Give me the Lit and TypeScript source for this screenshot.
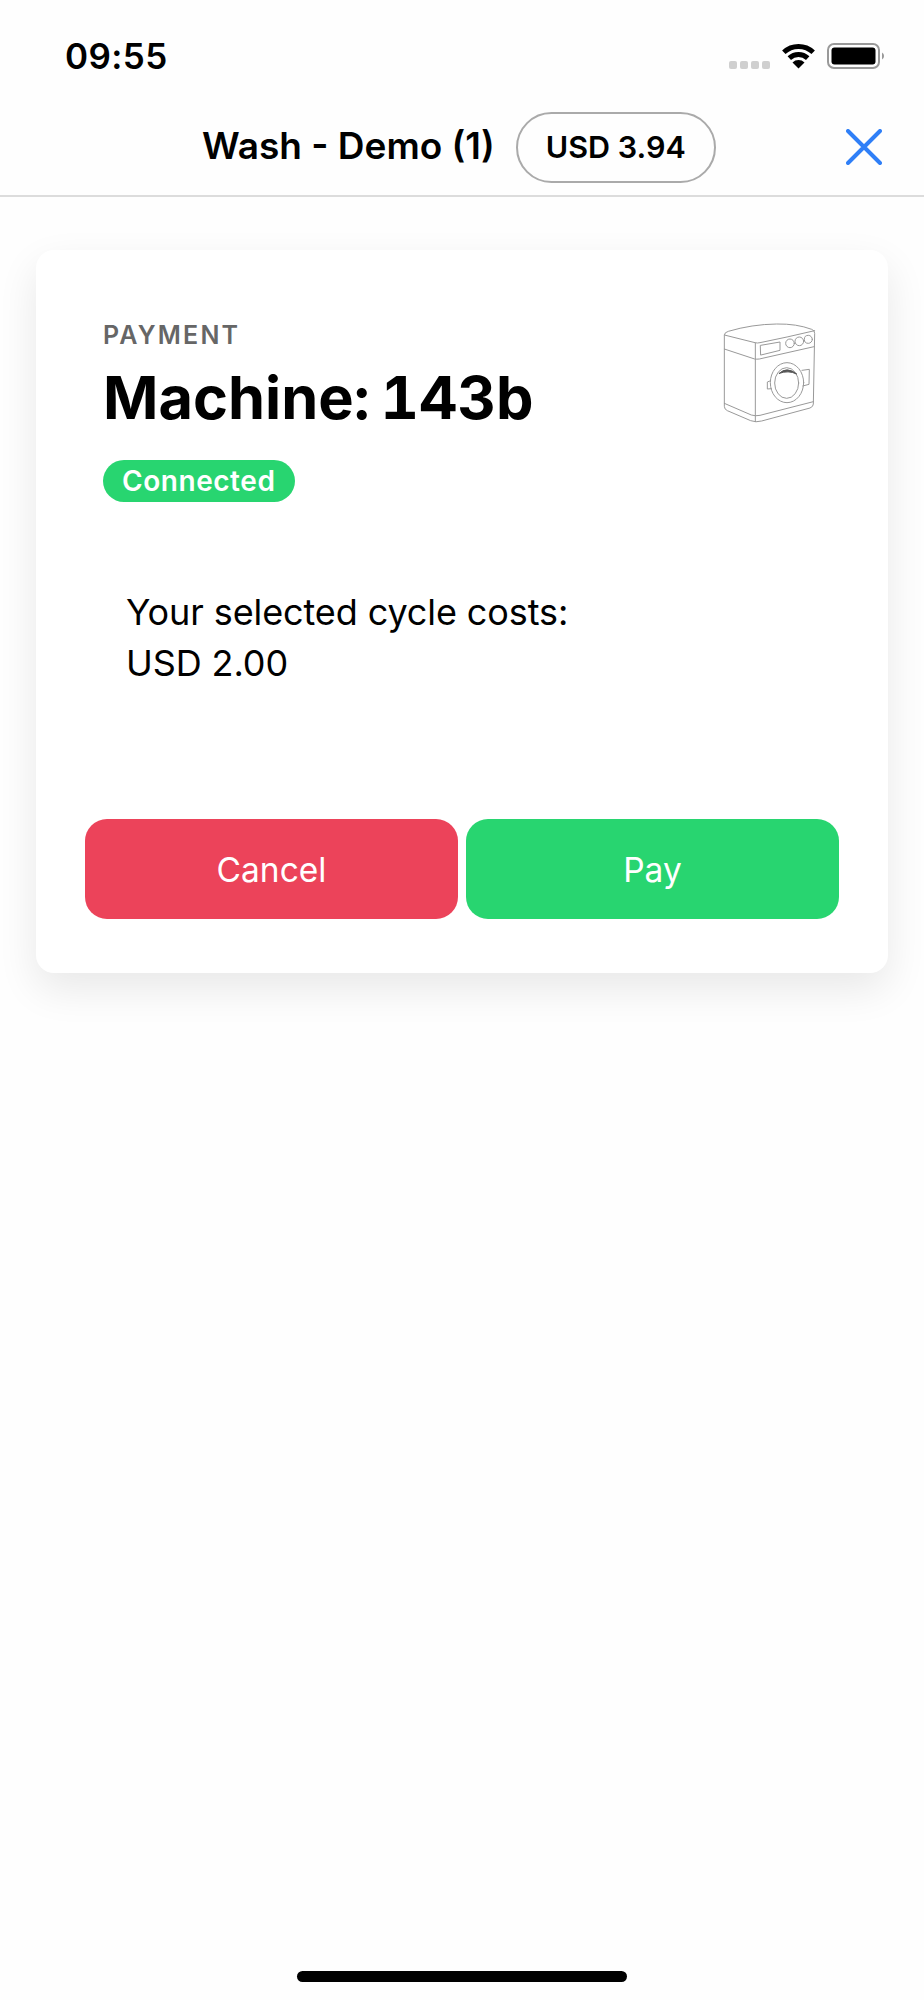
import { LitElement, html, css } from "lit";
import { customElement } from "lit/decorators.js";

@customElement("app-root")
export class AppRoot extends LitElement {
  static styles = css`
    :host {
      display: flex;
      flex-direction: column;
      height: 2000px;
      background: #fefefe;
      color: #000;
      font-family: Inter, "Liberation Sans", sans-serif;
    }

    .status {
      display: flex;
      align-items: center;
      height: 112px;
      padding: 0 38px 0 65px;
      box-sizing: border-box;
    }

    .time {
      font-size: 35px;
      font-weight: 600;
      line-height: 38px;
      letter-spacing: 0.4px;
      margin-right: auto;
    }

    .signal {
      display: flex;
      gap: 3px;
      margin: 18px 11px 0 0;
    }

    .signal span {
      width: 8px;
      height: 8px;
      border-radius: 2px;
      background: #cfcfcf;
    }

    .wifi {
      width: 35px;
      height: 26px;
      margin-right: 11px;
    }

    .battery {
      width: 59px;
      height: 26px;
    }

    .nav {
      display: flex;
      align-items: center;
      height: 85px;
      padding: 0 42px 13px 202px;
      box-sizing: border-box;
      border-bottom: 2px solid #dcdcdc;
    }

    .nav-title {
      margin-bottom: 3px;
      font-size: 37px;
      font-weight: 600;
      white-space: nowrap;
    }

    .balance {
      display: flex;
      align-items: center;
      justify-content: center;
      width: 200px;
      height: 71px;
      box-sizing: border-box;
      margin-left: 21px;
      padding-bottom: 2px;
      border: 2px solid #aaa;
      border-radius: 36px;
      font-size: 30.5px;
      font-weight: 600;
    }

    .close {
      width: 36px;
      height: 36px;
      margin-left: auto;
    }

    .card {
      height: 723px;
      box-sizing: border-box;
      margin: 53px 36px 0;
      padding: 0 68px;
      background: #fff;
      border-radius: 18px;
      box-shadow: 0 16px 40px rgba(0, 0, 0, 0.09);
    }

    .card-head {
      display: flex;
      justify-content: space-between;
      align-items: flex-start;
    }

    .eyebrow {
      margin: 70px 0 0 -1px;
      font-size: 25px;
      line-height: 30px;
      font-weight: 600;
      letter-spacing: 2.2px;
      color: #666;
    }

    .machine {
      margin: 11px 0 0 -1px;
      font-size: 59.5px;
      line-height: 72px;
      font-weight: 700;
      font-variant-numeric: tabular-nums;
      word-spacing: -5px;
      white-space: nowrap;
    }

    .pill {
      display: inline-block;
      margin: 27px 0 0 -1px;
      padding: 0 20px 0 19px;
      height: 42px;
      line-height: 42px;
      border-radius: 21px;
      background: #28d570;
      color: #fff;
      font-size: 28px;
      font-weight: 600;
      letter-spacing: 0.55px;
    }

    .washer {
      width: 100px;
      height: 106px;
      margin-top: 70px;
    }

    .cost {
      margin: 85px 0 0 22px;
      font-size: 36px;
      line-height: 51px;
      letter-spacing: -0.1px;
    }

    .actions {
      display: grid;
      grid-template-columns: 1fr 1fr;
      gap: 8px;
      margin: 130px -19px 0;
    }

    button {
      height: 100px;
      padding-top: 2px;
      border: 0;
      border-radius: 22px;
      color: #fff;
      font: 400 33.5px Inter, "Liberation Sans", sans-serif;
    }

    .cancel {
      background: #ec435a;
    }

    .pay {
      background: #28d570;
    }

    .home {
      width: 330px;
      height: 11px;
      margin: auto auto 18px;
      border-radius: 6px;
      background: #000;
    }
  `;

  render() {
    return html`
      <div class="status">
        <div class="time">09:55</div>
        <div class="signal"><span></span><span></span><span></span><span></span></div>
        <svg class="wifi" viewBox="0 0 35 26">
          <path d="M2.8 9.3A21.5 21.5 0 0 1 32.2 9.3M8.3 15.1A13.5 13.5 0 0 1 26.7 15.1" fill="none" stroke="#000" stroke-width="5" />
          <path d="M17.5 25.5L11.5 19.5A8.5 8.5 0 0 1 23.5 19.5Z" />
        </svg>
        <svg class="battery" viewBox="0 0 59 26">
          <rect x="1" y="1" width="51" height="24" rx="6" fill="none" stroke="#999" stroke-width="2" />
          <rect x="4.5" y="4.5" width="44" height="17" rx="3" />
          <path d="M55 9.5a4 4 0 0 1 0 7Z" fill="#999" />
        </svg>
      </div>
      <div class="nav">
        <span class="nav-title">Wash - Demo (1)</span>
        <span class="balance">USD 3.94</span>
        <svg class="close" viewBox="0 0 36 36">
          <path d="M2 2L34 34M34 2L2 34" fill="none" stroke="#2f7ff7" stroke-width="4" stroke-linecap="round" />
        </svg>
      </div>
      <div class="card">
        <div class="card-head">
          <div>
            <div class="eyebrow">PAYMENT</div>
            <h1 class="machine">Machine: 143b</h1>
            <span class="pill">Connected</span>
          </div>
          <svg class="washer" viewBox="120 90 300 318" fill="none" stroke="#999" stroke-width="3" stroke-linejoin="round" stroke-linecap="round">
            <!-- body -->
            <path d="M133 135Q133 127 145 124Q215 103 290 102Q350 101 395 118Q404 121 404 130L400 342Q400 350 390 354L245 393Q228 398 212 392L142 362Q133 358 133 350Z" />
            <path d="M133 135L225 158Q232 160 240 158Q320 142 404 122" />
            <path d="M133 177L224 207Q230 208 238 207L402 170" />
            <path d="M226 160L226 395" />
            <path d="M133 340L214 375Q226 379 240 376L400 335" />
            <!-- display and knobs -->
            <path d="M242 166L300 156V181L243 195Z" />
            <circle cx="330" cy="160" r="13" />
            <circle cx="358" cy="154" r="13" />
            <circle cx="385" cy="148" r="12" />
            <!-- door -->
            <ellipse cx="321" cy="278" rx="50" ry="60" />
            <ellipse cx="320" cy="279" rx="36" ry="46" />
            <path d="M298 250Q320 228 350 252Q325 240 298 250Z" fill="#555" stroke="#555" />
            <path d="M272 272L262 276V297L274 296" />
            <path d="M366 241L388 238L387 283L368 288" />
          </svg>
        </div>
        <div class="cost">Your selected cycle costs:<br />USD 2.00</div>
        <div class="actions">
          <button class="cancel">Cancel</button>
          <button class="pay">Pay</button>
        </div>
      </div>
      <div class="home"></div>
    `;
  }
}
